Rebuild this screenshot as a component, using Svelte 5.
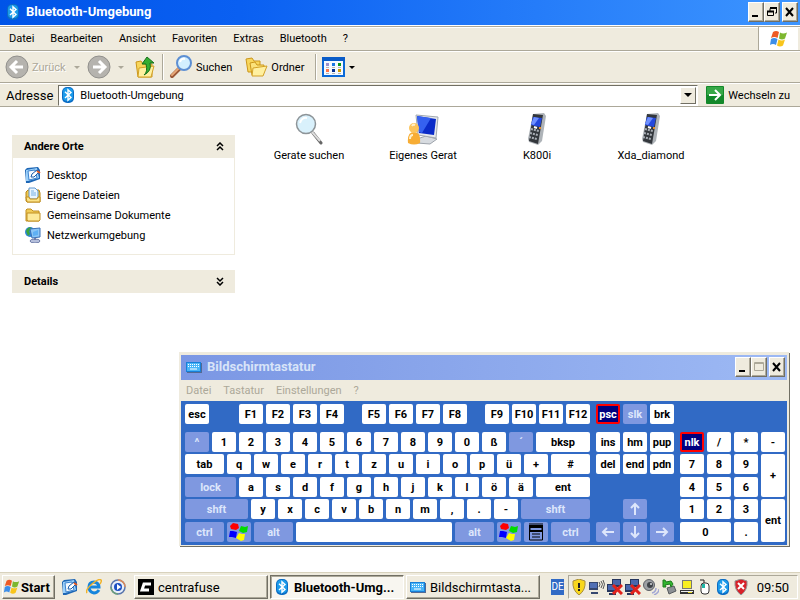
<script>
  const menus = ["Datei", "Bearbeiten", "Ansicht", "Favoriten", "Extras", "Bluetooth", "?"];
  const oskMenus = ["Datei", "Tastatur", "Einstellungen", "?"];

  const places = [
    { name: "Desktop", icon: "desktop" },
    { name: "Eigene Dateien", icon: "files" },
    { name: "Gemeinsame Dokumente", icon: "folder" },
    { name: "Netzwerkumgebung", icon: "network" },
  ];

  const devices = [
    { name: "Gerate suchen", icon: "search" },
    { name: "Eigenes Gerat", icon: "computer" },
    { name: "K800i", icon: "phone" },
    { name: "Xda_diamond", icon: "phone" },
  ];

  const tray = ["alert", "wireless", "offline", "offline", "speaker", "eject", "laptop", "mouse", "bt", "shield"];

  let address = $state("Bluetooth-Umgebung");
  let placesOpen = $state(true);

  // label, width, kind ("mod" = light blue, "on" = locked, "gap" = empty space)
  const k = (label, w = 24, kind = "") => ({ label, w, kind });
  const keys = (text) => text.split(" ").map((c) => k(c));

  const mainRows = [
    [k("esc"), k("", 24, "gap"), ...keys("F1 F2 F3 F4"), k("", 12, "gap"), ...keys("F5 F6 F7 F8"), k("", 12, "gap"), ...keys("F9 F10 F11 F12")],
    [k("^", 24, "mod"), ...keys("1 2 3 4 5 6 7 8 9 0 ß"), k("´", 24, "mod"), k("bksp", 54)],
    [k("tab", 39), ...keys("q w e r t z u i o p ü +"), k("#", 39)],
    [k("lock", 51, "mod"), ...keys("a s d f g h j k l ö ä"), k("ent", 54)],
    [k("shft", 63, "mod"), ...keys("y x c v b n m , . -"), k("shft", 69, "mod")],
    [k("ctrl", 39, "mod"), k("win", 24, "mod"), k("alt", 39, "mod"), k("", 156), k("alt", 39, "mod"), k("win", 24, "mod"), k("menu", 24, "mod"), k("ctrl", 39, "mod")],
  ];

  const navRows = [
    [k("psc", 24, "on"), k("slk", 24, "mod"), k("brk")],
    keys("ins hm pup"),
    keys("del end pdn"),
    [],
    [k("", 24, "gap"), k("up", 24, "mod")],
    [k("left", 24, "mod"), k("down", 24, "mod"), k("right", 24, "mod")],
  ];

  const padRows = [
    [],
    [k("nlk", 24, "on"), ...keys("/ *")],
    keys("7 8 9"),
    keys("4 5 6"),
    keys("1 2 3"),
    [k("0", 51), k(".")],
  ];

  const arrows = { up: 0, right: 90, down: 180, left: 270 };
</script>

{#snippet bluetooth(size)}
  <svg width={size} height={size} viewBox="0 0 16 16" aria-hidden="true">
    <rect x="2" y="0" width="12" height="16" rx="5" fill="#0b6cc4" />
    <rect x="3" y="1" width="10" height="13" rx="4" fill="#1c9bea" />
    <path d="M5 4.8l6 5.8-3 2.7V2.7l3 2.7-6 5.6" fill="none" stroke="#fff" stroke-width="1.4" />
  </svg>
{/snippet}

{#snippet flag(size)}
  <svg width={size} height={size} viewBox="0 0 20 20" aria-hidden="true">
    <path d="M4 3q3-2 6 0l-1.500 6q-3-2-6.500 0z" fill="#ee5a24" />
    <path d="M11 3.500q3 2 7 0l-2 6q-3 2-6 0z" fill="#7db72f" />
    <path d="M2 10q3-2 6.500 0l-1.500 6q-3-2-6 0z" fill="#3d8ee8" />
    <path d="M9.500 10.500q3 2 6.500 0l-2 6q-3 2-6 0z" fill="#f8c51c" />
  </svg>
{/snippet}

{#snippet keyboard(size)}
  <svg width={size} height={size} viewBox="0 0 16 16" aria-hidden="true">
    <path d="M1 4h15v10H1z" fill="#526a94" />
    <path d="M0 3h15v10H0z" fill="#187fd8" />
    <path d="M1 4h13v8H1z" fill="#49b5f8" />
    <path d="M2 5.500h11M2 7.500h11" stroke="#fff" stroke-dasharray="1 1" />
    <path d="M4 10h7" stroke="#fff" />
  </svg>
{/snippet}

{#snippet folders(size)}
  <svg width={size} height={size} viewBox="0 0 24 24" aria-hidden="true">
    <path d="M2 4l6-1 2 3h6v11H4z" fill="#f8d65c" stroke="#cb961b" />
    <path d="M6 8l5-1 2 3h7l-1 10H8z" fill="#fbe27b" stroke="#cb961b" />
    <path d="M9 13l14-2-4 10H8z" fill="#fff0a0" stroke="#d3a127" />
  </svg>
{/snippet}

{#snippet notepad(size)}
  <svg width={size} height={size} viewBox="0 0 16 16" aria-hidden="true">
    <path d="M0 3l2-2 11-1 2 3v9l-11 4H1z" fill="#1d66b5" />
    <path d="M1 3l11-2 2 10-11 3H1z" fill="#9bd0fa" />
    <path d="M3 4l7-1 2 8-8 2z" fill="#f4faff" stroke="#3d83ce" />
    <path d="M6 10l1-3 5-4 2 2-5 5z" fill="#fff" stroke="#1b5ca8" />
    <path d="M12 4l3 2" stroke="#e05822" stroke-width="2" />
  </svg>
{/snippet}

{#snippet placeIcon(name)}
  {#if name === "desktop"}
    {@render notepad(16)}
  {:else if name === "files"}
    <svg width="16" height="16" viewBox="0 0 16 16" aria-hidden="true">
      <path d="M1 5l2-2h11l1 3v9H2l-1-1z" fill="#edc64d" stroke="#b78618" />
      <path d="M4 1h6l3 3v8H4z" fill="#eaf5ff" stroke="#5e97d0" />
      <path d="M6 4h3M6 6h5M6 8h5" stroke="#76b0e4" />
      <path d="M1 10h3l1 2h7l1-2h2v5H2z" fill="#fbe389" stroke="#c39123" />
    </svg>
  {:else if name === "folder"}
    <svg width="16" height="16" viewBox="0 0 16 16" aria-hidden="true">
      <path d="M1 3l1-1h4l2 2h6v10H1z" fill="#f1cc57" stroke="#c18f22" />
      <path d="M2 6h13v7l-1 1H3L2 13z" fill="#fdea9a" stroke="#c18f22" />
    </svg>
  {:else}
    <svg width="16" height="16" viewBox="0 0 16 16" aria-hidden="true">
      <circle cx="5" cy="5" r="5" fill="#2d86d8" />
      <path d="M1 4q1-3 4-4l2 2-3 2 1 3-2 2z" fill="#3ba53d" />
      <path d="M5 2l10-1v9l-8 1z" fill="#8bc6f6" stroke="#3a70b8" />
      <path d="M8 5l5-2v5l-5 1z" fill="#5fb0f4" />
      <ellipse cx="10" cy="14" rx="5" ry="2" fill="#b4bedb" stroke="#6f7da8" />
      <path d="M10 11v2" stroke="#6f7da8" stroke-width="2" />
    </svg>
  {/if}
{/snippet}

{#snippet deviceIcon(name)}
  {#if name === "search"}
    <svg width="32" height="32" viewBox="0 0 32 32" aria-hidden="true">
      <path d="M20 20l8 10" stroke="#666" stroke-width="3" stroke-linecap="round" />
      <path d="M19 19l8 9" stroke="#ddd" stroke-width="2" />
      <circle cx="13" cy="11" r="9.500" fill="#d9f1fc" stroke="#8d9498" stroke-width="1.500" />
      <path d="M7 10q2-6 7-5" fill="none" stroke="#fff" stroke-width="2" />
    </svg>
  {:else if name === "computer"}
    <svg width="32" height="32" viewBox="0 0 32 32" aria-hidden="true">
      <path d="M10 26l9-3 11 3-7 5-13-1z" fill="#d7dbe0" stroke="#9da3ab" />
      <path d="M9 2l22 2-2 21-18-3z" fill="#e5e8ec" stroke="#a2a9b1" />
      <path d="M10 3l19 3-2 16-15-2z" fill="#0a2bc8" />
      <path d="M10 3l14 2-9 15-3-1z" fill="#3561f0" />
      <path d="M1 30q-1-11 6-11t6 11q-6 3-12 0z" fill="#f7ad35" />
      <circle cx="7" cy="15" r="5" fill="#fbc45c" />
      <path d="M3 26q0-4 3-4M5 13q1-2 3-1" fill="none" stroke="#fff0c8" stroke-width="2" />
    </svg>
  {:else}
    <svg width="32" height="32" viewBox="0 0 32 32" aria-hidden="true">
      <path d="M12 1l11-1 2 3-4 25-4 4-9-3-1-3z" fill="#aeb3b8" />
      <path d="M12 1l10 1-5 29-9-3z" fill="#33373c" />
      <path d="M12 4l9 1-2 9-9-2z" fill="#2448dd" />
      <path d="M13 4l5 1-5 7-3-1z" fill="#6f90ff" />
      <path d="M10 16l8 2M9 20l8 2M8 24l8 2" stroke="#a8adb4" stroke-width="2" stroke-dasharray="2 1" />
      <path d="M13 14l3 1" stroke="#fff" stroke-width="2" />
      <path d="M18 15h2" stroke="#e58b2a" stroke-width="2" />
    </svg>
  {/if}
{/snippet}

{#snippet trayIcon(name)}
  {#if name === "bt"}
    {@render bluetooth(16)}
  {:else}
    <svg width="16" height="16" viewBox="0 0 16 16" aria-hidden="true">
      {#if name === "alert"}
        <path d="M8 0l6 2q1 9-6 14Q1 11 2 2z" fill="#f8d71c" stroke="#a78e3e" />
        <path d="M8 4v5M8 10v2" stroke="#222" stroke-width="2" />
      {:else if name === "wireless"}
        <path d="M0 3h9v8H0zM2 13h7v2H2z" fill="#36476f" />
        <path d="M1 4h7v5H1z" fill="#5270b5" />
        <path d="M10 3q2 2 0 5M12 2q3 3 0 7M14 1q3 4 0 9" fill="none" stroke="#555" />
      {:else if name === "offline"}
        <path d="M5 0h9v8H5zM0 5h9v8H0zM2 14h7v2H2z" fill="#26365e" />
        <path d="M6 1h7v5H6zM1 6h7v5H1z" fill="#4866ac" />
        <path d="M6 6l9 9M15 6l-9 9" stroke="#e2231c" stroke-width="3" />
      {:else if name === "speaker"}
        <circle cx="6" cy="6" r="5.500" fill="#9da0a4" stroke="#5d6065" />
        <circle cx="7" cy="6" r="3" fill="#3f4348" />
        <circle cx="8" cy="5" r="1" fill="#d8dadd" />
        <path d="M9 14q4-1 4-5M11 16q5-2 5-6" fill="none" stroke="#a2a6d4" stroke-width="1.500" />
      {:else if name === "eject"}
        <path d="M6 9l7-2 2 5-7 3z" fill="#8c9094" stroke="#55595d" />
        <path d="M2 1v7h3L4 6l5-1 1 3 2-3-2-3-5 1-1-2z" fill="#32b62e" stroke="#1c7a1d" />
      {:else if name === "laptop"}
        <path d="M3 1h10v9H3z" fill="#777" />
        <path d="M4 2h8v7H4z" fill="#f8ee20" />
        <path d="M1 11h14v4H1z" fill="#333" />
        <path d="M2 12h12v1H2z" fill="#eee" />
        <path d="M9 13h4v1H9z" fill="#e7da28" />
      {:else if name === "mouse"}
        <path d="M3 1h4v4" fill="none" stroke="#222" />
        <rect x="4" y="4" width="8" height="11" rx="3" fill="#fff" stroke="#333" />
        <path d="M5 5h3v4H5z" fill="#1fb8a7" />
      {:else}
        <path d="M8 0l6 2q1 9-6 14Q1 11 2 2z" fill="#d8222a" stroke="#969696" />
        <path d="M5 4l6 6M11 4l-6 6" stroke="#fff" stroke-width="2" />
      {/if}
    </svg>
  {/if}
{/snippet}

{#snippet winButtons(middle)}
  <div class="win-buttons">
    <button aria-label="Minimieren">
      <svg width="12" height="12" viewBox="0 0 12 12"><path d="M2 10h6" stroke="#000" stroke-width="2" /></svg>
    </button>
    {#if middle === "restore"}
      <button aria-label="Wiederherstellen">
        <svg width="12" height="12" viewBox="0 0 12 12">
          <path d="M4 5V2.500h6.500V7H9M1.500 5.500h6v4h-6z" fill="none" stroke="#000" />
          <path d="M4 2h7M1 5.500h7" stroke="#000" stroke-width="2" />
        </svg>
      </button>
    {:else}
      <button aria-label="Maximieren" disabled>
        <svg width="12" height="12" viewBox="0 0 12 12">
          <path d="M1.500 1.500h9v8h-9zM1 2.500h10" fill="none" stroke="#aca899" />
        </svg>
      </button>
    {/if}
    <button class="close" aria-label="Schließen">
      <svg width="12" height="12" viewBox="0 0 12 12"><path d="M2 2l7 8M9 2l-7 8" stroke="#000" stroke-width="2" /></svg>
    </button>
  </div>
{/snippet}

{#snippet key(item)}
  {#if item.kind === "gap"}
    <span class="gap" style:width="{item.w}px"></span>
  {:else}
    <button class="key {item.kind}" style:width="{item.w}px" aria-label={item.label || "Leertaste"}>
      {#if item.label === "win"}
        <svg width="20" height="20" viewBox="0 0 20 20">
          <path d="M4 1l5 1 1 4-3 2-5-1-1-3z" fill="#f00" />
          <path d="M12 4l4 1 3-1-1 6-4 1-4-2z" fill="#0d0" />
          <path d="M1 9l3 0 4 1-1 6-4-1-3 0z" fill="#00f" />
          <path d="M10 11l3 1 3 0-1 6-3 1-5-3z" fill="#ff0" />
        </svg>
      {:else if item.label === "menu"}
        <svg width="14" height="18" viewBox="0 0 14 18">
          <path d="M0 1h14M1 4.500h12v3H1zM.500 3v14h13V3M3 11h8M3 14h8" fill="none" stroke="#000" />
          <path d="M0 3h14M0 8h14" stroke="#000" stroke-width="2" />
        </svg>
      {:else if item.label in arrows}
        <svg width="14" height="14" viewBox="0 0 14 14">
          <path d="M7 13V2M3 6l4-4 4 4" fill="none" stroke="#dde6fb" stroke-width="2" transform="rotate({arrows[item.label]} 7 7)" />
        </svg>
      {:else}
        {item.label}
      {/if}
    </button>
  {/if}
{/snippet}

<div class="screen">
  <header class="title">
    {@render bluetooth(16)}
    <h1>Bluetooth-Umgebung</h1>
    {@render winButtons("restore")}
  </header>

  <div class="menubar">
    <nav>
      {#each menus as menu}
        <button>{menu}</button>
      {/each}
    </nav>
    <div class="brand">{@render flag(20)}</div>
  </div>

  <div class="toolbar">
    <button class="tool back" disabled>
      <svg width="24" height="24" viewBox="0 0 24 24">
        <circle cx="12" cy="12" r="11" fill="#b5b3ae" stroke="#91908c" />
        <path d="M18 12H7M12 6l-6 6 6 6" fill="none" stroke="#fff" stroke-width="3" />
      </svg>
      Zurück
      <i class="arrow"></i>
    </button>
    <button class="tool forward" disabled aria-label="Vorwärts">
      <svg width="24" height="24" viewBox="0 0 24 24">
        <circle cx="12" cy="12" r="11" fill="#b5b3ae" stroke="#91908c" />
        <path d="M6 12h11M12 6l6 6-6 6" fill="none" stroke="#fff" stroke-width="3" />
      </svg>
      <i class="arrow"></i>
    </button>
    <button class="tool up" aria-label="Aufwärts">
      <svg width="24" height="24" viewBox="0 0 24 24">
        <path d="M3 7l5-1 2 3h9v13H5z" fill="#f8d65c" stroke="#cb961b" />
        <path d="M6 13l15-2-3 11H5z" fill="#fff0a0" stroke="#d3a127" />
        <path d="M11 20q4-3 2-11H9l5-7 7 6h-4q2 8-6 12z" fill="#35ad31" stroke="#16701a" />
      </svg>
    </button>
    <span class="sep"></span>
    <button class="tool">
      <svg width="24" height="24" viewBox="0 0 24 24">
        <path d="M10 14l-7 7" stroke="#9b5736" stroke-width="4" stroke-linecap="round" />
        <path d="M10 13l-7 7" stroke="#e7a878" stroke-width="2" stroke-linecap="round" />
        <circle cx="15" cy="8" r="7" fill="#d2efff" stroke="#5d8fd3" stroke-width="2" />
        <path d="M11 7q1-4 5-3" fill="none" stroke="#fff" stroke-width="2" />
      </svg>
      Suchen
    </button>
    <button class="tool folders">
      {@render folders(24)}
      Ordner
    </button>
    <span class="sep"></span>
    <button class="tool" aria-label="Ansichten">
      <svg width="24" height="20" viewBox="0 0 24 20">
        <path d="M1 1h21v18H1z" fill="#f5faff" stroke="#0a69d8" stroke-width="2" />
        <path d="M0 0h23v4H0z" fill="#0a5cc8" />
        <path d="M4 6h3v3H4z" fill="#9a90cc" />
        <path d="M10 6h3v3h-3z" fill="#1877e4" />
        <path d="M16 6h3v3h-3z" fill="#0a971b" />
        <path d="M4 12h3v3H4z" fill="#ff7448" />
        <path d="M10 12h3v3h-3z" fill="#07308f" />
        <path d="M16 12h3v3h-3z" fill="#cf9b00" />
        <path d="M4 10.500h3m3 0h3m3 0h3M4 16.500h3m3 0h3m3 0h3" stroke="#b5b5b5" />
      </svg>
      <i class="arrow"></i>
    </button>
  </div>

  <div class="address">
    <label for="address">Adresse</label>
    <div class="combo">
      {@render bluetooth(16)}
      <input id="address" type="text" bind:value={address} />
      <button class="drop" aria-label="Verlauf"><i class="arrow"></i></button>
    </div>
    <button class="go">
      <svg width="18" height="18" viewBox="0 0 18 18">
        <rect width="18" height="18" rx="1" fill="#13882a" />
        <path d="M1 1h16v8H1z" fill="#36a746" />
        <path d="M3 9h10M9 4l5 5-5 5" fill="none" stroke="#fff" stroke-width="2" />
      </svg>
      Wechseln zu
    </button>
  </div>

  <main>
    <aside>
      <section>
        <button class="head" onclick={() => (placesOpen = !placesOpen)}>
          Andere Orte
          <svg width="9" height="9" viewBox="0 0 9 9"><path d="M1 4l3-3 3 3M1 8l3-3 3 3" fill="none" stroke="#000" stroke-width="1.500" /></svg>
        </button>
        {#if placesOpen}
          <ul>
            {#each places as place}
              <li>
                <a href="#{place.icon}">{@render placeIcon(place.icon)}{place.name}</a>
              </li>
            {/each}
          </ul>
        {/if}
      </section>
      <section>
        <button class="head">
          Details
          <svg width="9" height="9" viewBox="0 0 9 9"><path d="M1 1l3 3 3-3M1 5l3 3 3-3" fill="none" stroke="#000" stroke-width="1.500" /></svg>
        </button>
      </section>
    </aside>
    <div class="devices">
      {#each devices as device}
        <button class="device">
          {@render deviceIcon(device.icon)}
          {device.name}
        </button>
      {/each}
    </div>
  </main>

  <footer>
    <button class="start">{@render flag(18)}Start</button>
    <div class="quick">
      <button aria-label="Desktop anzeigen">{@render notepad(16)}</button>
      <button aria-label="Internet Explorer">
        <svg width="16" height="16" viewBox="0 0 16 16">
          <path d="M13 11q-2 3-5 3-5-1-5-6t5-5q5 1 5 5H4" fill="none" stroke="#1685dc" stroke-width="3" />
          <path d="M1 14q-2-3 5-9t9-4q1 1-1 4" fill="none" stroke="#f0b32b" stroke-width="1.500" />
        </svg>
      </button>
      <button aria-label="Media Player">
        <svg width="16" height="16" viewBox="0 0 16 16">
          <circle cx="8" cy="8" r="7" fill="#e8eef8" stroke="#5a76ad" stroke-width="1.500" />
          <path d="M8 1a7 7 0 0 1 7 7" fill="none" stroke="#e08a55" stroke-width="1.500" />
          <path d="M1 8a7 7 0 0 0 7 7" fill="none" stroke="#6c9f7a" stroke-width="1.500" />
          <circle cx="8" cy="8" r="4" fill="#1d50c2" />
          <path d="M7 5l4 3-4 3z" fill="#fff" />
        </svg>
      </button>
    </div>
    <div class="tasks">
      <button>
        <svg width="16" height="16" viewBox="0 0 16 16">
          <path d="M0 0h16v16H0z" />
          <path d="M13 5H6L4 11h7" fill="none" stroke="#fff" stroke-width="3" />
        </svg>
        centrafuse
      </button>
      <button class="active">{@render bluetooth(16)}Bluetooth-Umg...</button>
      <button>{@render keyboard(16)}Bildschirmtasta...</button>
    </div>
    <span class="lang">DE</span>
    <div class="tray">
      {#each tray as name}
        {@render trayIcon(name)}
      {/each}
      <time>09:50</time>
    </div>
  </footer>

  <div class="osk">
    <div class="title inactive">
      {@render keyboard(16)}
      <h2>Bildschirmtastatur</h2>
      {@render winButtons("maximize")}
    </div>
    <nav>
      {#each oskMenus as menu}
        <button>{menu}</button>
      {/each}
    </nav>
    <div class="keys">
      {#each [mainRows, navRows, padRows] as block}
        <div class="block">
          {#each block as row}
            <div class="row">
              {#each row as item}
                {@render key(item)}
              {/each}
            </div>
          {/each}
        </div>
      {/each}
      <div class="block side">
        <span></span>
        <button class="key">-</button>
        <button class="key tall">+</button>
        <button class="key tall">ent</button>
      </div>
    </div>
  </div>
</div>

<style>
  :global(body) {
    margin: 0;
    background: #fff;
  }

  .screen {
    min-height: 100vh;
    display: flex;
    flex-direction: column;
    position: relative;
    overflow: hidden;
    font-family: Roboto, "DejaVu Sans Condensed", sans-serif;
    font-size: 11px;
    color: #000;
  }

  button {
    font: inherit;
    color: inherit;
    background: none;
    border: 0;
    padding: 0;
    margin: 0;
    white-space: nowrap;
  }

  svg {
    display: block;
    flex: none;
  }

  /* title bars */
  .title {
    height: 25px;
    display: flex;
    align-items: center;
    gap: 5px;
    box-sizing: border-box;
    padding: 0 2px 1px 5px;
    background: linear-gradient(90deg, #0054e8, #0a60f2 30%, #3d95ff);
    color: #fff;
  }

  h1,
  h2 {
    flex: 1;
    margin: 0;
    font-size: 13px;
    font-weight: bold;
    line-height: 18px;
  }

  .inactive {
    background: linear-gradient(90deg, #7b97e4, #9db9f4);
    color: #d8e4f8;
  }

  .win-buttons {
    display: flex;
  }

  .win-buttons button {
    width: 16px;
    height: 20px;
    display: grid;
    place-items: center;
    box-sizing: border-box;
    background: #efebde;
    border: 1px solid;
    border-color: #fff #716f64 #716f64 #fff;
    box-shadow: inset -1px -1px #aca899;
  }

  .win-buttons .close {
    margin-left: 2px;
  }

  /* bars of the explorer window */
  .menubar,
  .toolbar,
  .address {
    display: flex;
    align-items: center;
    box-sizing: border-box;
    background: #efebde;
    border-bottom: 1px solid #aca899;
  }

  .menubar {
    height: 26px;
    padding: 1px 2px 0 0;
    border-top: 1px solid #fff;
    box-shadow: inset 0 1px #aca899, inset 0 2px #fff;
  }

  .menubar nav {
    flex: 1;
    display: flex;
    gap: 16px;
    padding-left: 9px;
  }

  .brand {
    width: 40px;
    height: 100%;
    display: grid;
    place-items: center;
    box-sizing: border-box;
    border-left: 1px solid #aca899;
    background: #fff;
  }

  .toolbar {
    height: 32px;
    padding-left: 5px;
    border-top: 1px solid #fff;
  }

  .tool {
    display: flex;
    align-items: center;
    gap: 3px;
  }

  .tool:disabled {
    color: #aca899;
    text-shadow: 1px 1px #fff;
  }

  .arrow {
    border: 3px solid transparent;
    border-top-color: currentColor;
    border-bottom: 0;
  }

  .back {
    width: 82px;
  }

  .back .arrow {
    margin-left: 5px;
  }

  .forward {
    width: 46px;
    gap: 7px;
  }

  .sep {
    width: 1px;
    height: 26px;
    margin: 0 5px;
    background: #aca899;
    border-right: 1px solid #fff;
  }

  .folders {
    margin-left: 12px;
    margin-right: 6px;
  }

  .address {
    height: 24px;
    gap: 5px;
    padding: 0 10px 0 6px;
    border-top: 1px solid #fff;
  }

  .address label {
    font-size: 13px;
  }

  .combo {
    flex: 1;
    height: 21px;
    display: flex;
    align-items: center;
    gap: 4px;
    box-sizing: border-box;
    padding: 0 1px;
    background: #fff;
    border: 1px solid;
    border-color: #716f64 #fff #fff #716f64;
  }

  .combo input {
    flex: 1;
    min-width: 0;
    padding: 0;
    border: 0;
    outline: 0;
    font: inherit;
    background: none;
  }

  .drop {
    width: 16px;
    height: 17px;
    display: grid;
    place-items: center;
    background: #efebde;
    border: 1px solid;
    border-color: #fff #716f64 #716f64 #fff;
    box-sizing: border-box;
  }

  .drop .arrow {
    border-width: 4px 4px 0;
  }

  .go {
    display: flex;
    align-items: center;
    gap: 4px;
    margin-left: 3px;
  }

  /* content */
  main {
    flex: 1;
    display: flex;
    align-items: flex-start;
    background: #fff;
  }

  aside {
    width: 223px;
    margin: 28px 17px 0 12px;
    display: flex;
    flex-direction: column;
    gap: 15px;
  }

  .head {
    width: 100%;
    height: 23px;
    display: flex;
    align-items: center;
    justify-content: space-between;
    padding: 0 10px 0 12px;
    background: #efebde;
    font-weight: bold;
  }

  ul {
    margin: 0;
    padding: 7px 12px 9px;
    list-style: none;
    border: 1px solid #efebde;
    border-top: 0;
  }

  li a {
    height: 20px;
    display: flex;
    align-items: center;
    gap: 6px;
    color: #000;
    text-decoration: none;
  }

  .devices {
    flex: 1;
    display: grid;
    grid-template-columns: repeat(auto-fill, 114px);
    padding-top: 6px;
  }

  .device {
    display: flex;
    flex-direction: column;
    align-items: center;
    gap: 4px;
  }

  /* taskbar */
  footer {
    height: 28px;
    display: flex;
    align-items: center;
    box-sizing: border-box;
    padding: 1px 2px 0;
    background: #efebde;
    border-top: 1px solid #d8d2bd;
    font-size: 13px;
  }

  .start,
  .tasks button {
    height: 24px;
    display: flex;
    align-items: center;
    box-sizing: border-box;
    background: #efebde;
    border: 1px solid;
    border-color: #fff #716f64 #716f64 #fff;
    box-shadow: inset -1px -1px #aca899;
  }

  .start {
    width: 53px;
    font-weight: bold;
  }

  .quick {
    display: flex;
    gap: 8px;
    padding: 0 8px 0 7px;
  }

  .tasks {
    flex: 1;
    display: flex;
    gap: 2px;
  }

  .tasks button {
    flex: 0 0 134px;
    gap: 4px;
    padding: 0 3px;
  }

  .tasks .active {
    background: #f8f6f0;
    border-color: #716f64 #fff #fff #716f64;
    box-shadow: inset 1px 1px #aca899;
    font-weight: bold;
  }

  .lang {
    margin-right: 4px;
    background: #316ac5;
    color: #fff;
    font-size: 10px;
    line-height: 16px;
  }

  .tray {
    height: 24px;
    display: flex;
    align-items: center;
    gap: 2px;
    box-sizing: border-box;
    padding: 0 8px 0 2px;
    border: 1px solid;
    border-color: #aca899 #fff #fff #aca899;
  }

  .tray time {
    margin-left: 6px;
  }

  /* on-screen keyboard */
  .osk {
    position: absolute;
    left: 179px;
    top: 352px;
    border: 2px solid #efebde;
    border-top-width: 3px;
    border-bottom-width: 1px;
    box-shadow: 1px 1px #716f64;
    background: #efebde;
  }

  .osk nav {
    height: 21px;
    display: flex;
    align-items: center;
    gap: 12px;
    padding-left: 5px;
    color: #aca899;
  }

  .keys {
    display: flex;
    gap: 6px;
    padding: 3px 2px 3px 4px;
    background: #316ac5;
    font-weight: bold;
  }

  .block {
    display: grid;
    grid-template-rows: 28px 22px 23px 22px 23px 20px;
  }

  .row {
    display: flex;
    gap: 3px;
  }

  .side {
    margin-left: -3px;
  }

  .key {
    width: 24px;
    height: 20px;
    display: flex;
    align-items: center;
    justify-content: center;
    overflow: hidden;
    background: #fff;
    border-radius: 2px;
  }

  .key.mod {
    background: #7f98e0;
    color: #dde6fb;
  }

  .key.on {
    box-sizing: border-box;
    background: #000080;
    border: 2px solid #f00;
    color: #fff;
  }

  .key.tall {
    height: 43px;
    grid-row: span 2;
  }
</style>
